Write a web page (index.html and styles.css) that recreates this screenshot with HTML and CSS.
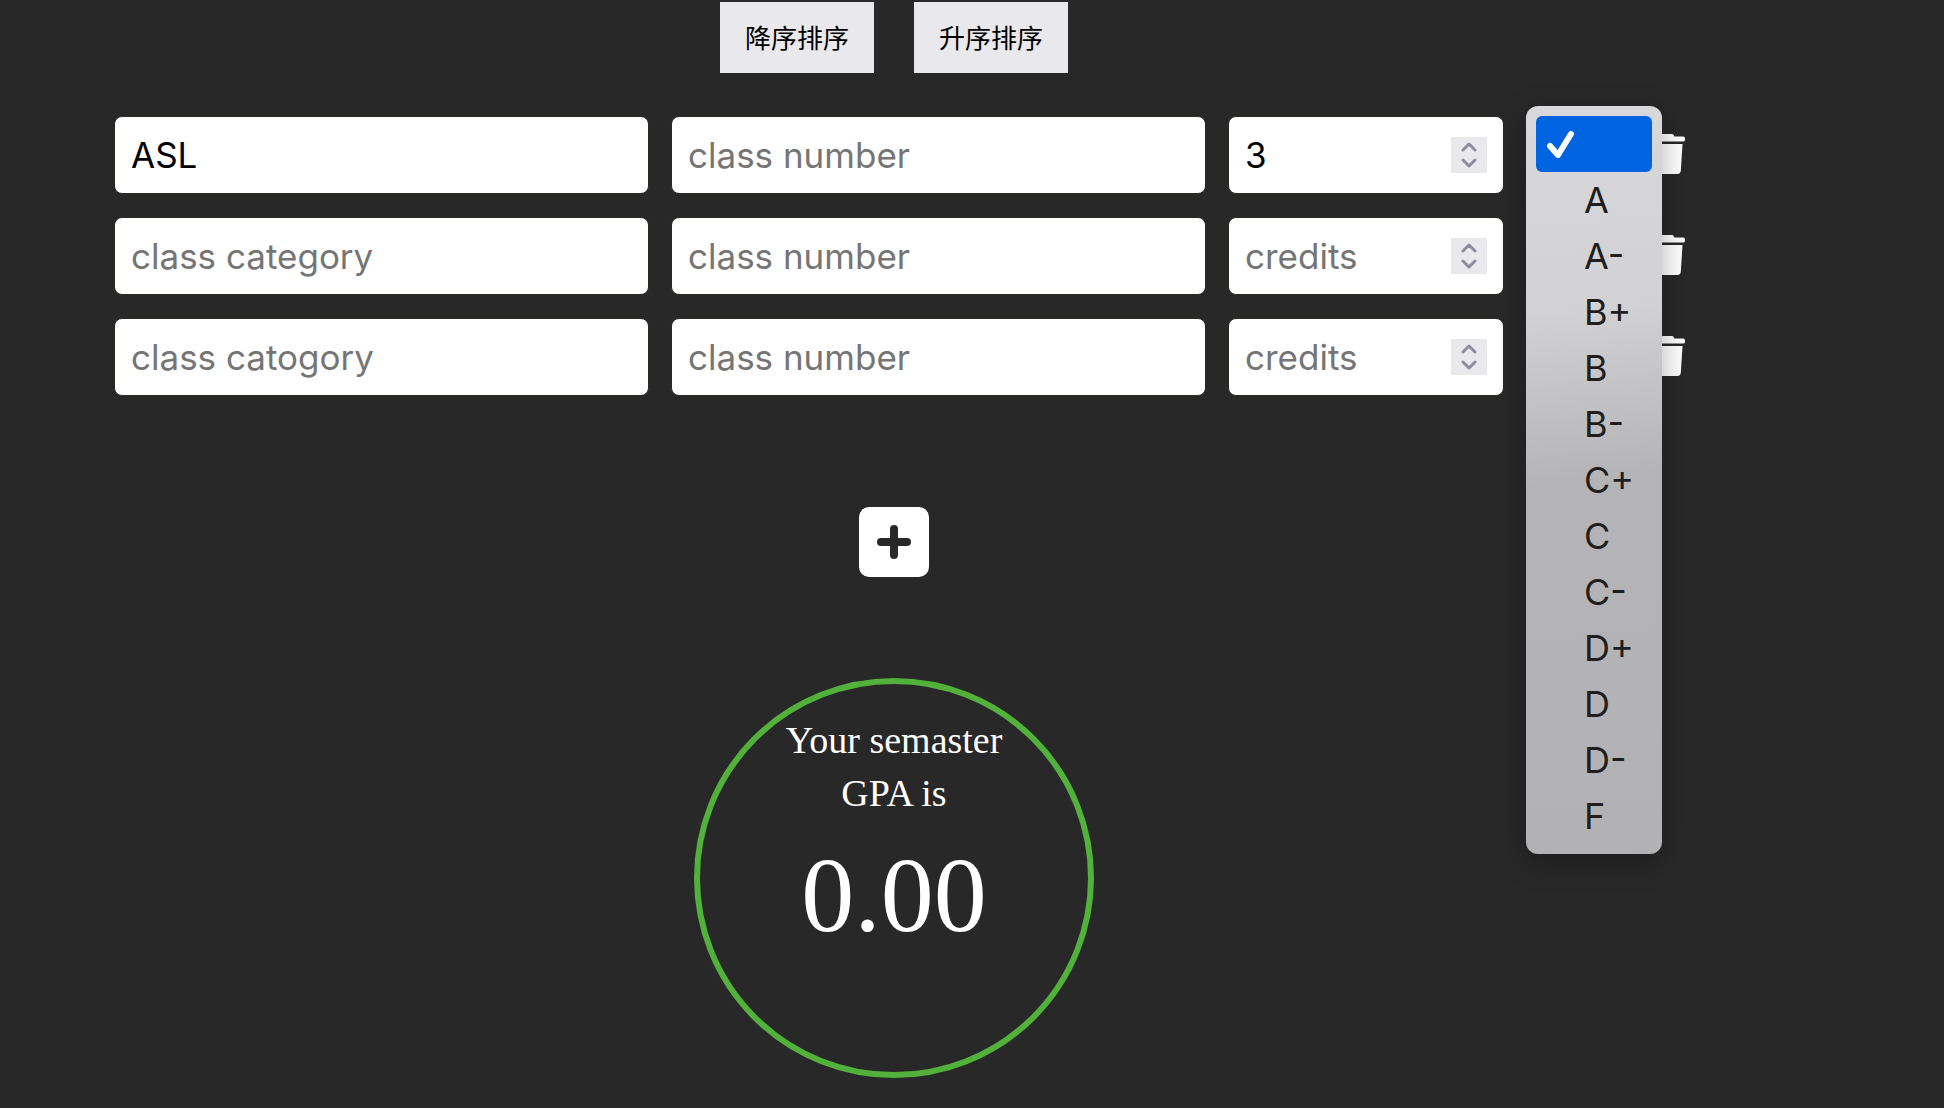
FILE: index.html
```html
<!DOCTYPE html>
<html lang="en">
<head>
<meta charset="utf-8">
<title>GPA Calculator</title>
<link rel="stylesheet" href="styles.css">
</head>
<body>
<svg class="sprite" aria-hidden="true">
  <symbol id="trash" viewBox="0 0 448 512"><path d="M424 32H312l-9.400-18.700A24 24 0 0 0 281.100 0H166.800a23.720 23.720 0 0 0-21.400 13.300L136 32H24A24 24 0 0 0 0 56v16a24 24 0 0 0 24 24h400a24 24 0 0 0 24-24V56a24 24 0 0 0-24-24zM53.200 467a48 48 0 0 0 47.900 45h245.800a48 48 0 0 0 47.900-45L416 128H32z"/></symbol>
  <symbol id="steps" viewBox="0 0 36 36"><path d="M12 13l6-6 6 6M12 23l6 6 6-6" fill="none" stroke="#8e8c9b" stroke-width="3" stroke-linecap="round" stroke-linejoin="round"/></symbol>
</svg>
<main class="page">
  <div class="sorting">
    <button class="sort" type="button">降序排序</button>
    <button class="sort" type="button">升序排序</button>
  </div>
  <form class="classes">
    <div class="row">
      <input class="field" type="text" aria-label="class category" placeholder="class category" value="ASL">
      <input class="field" type="text" aria-label="class number" placeholder="class number">
      <div class="credits">
        <input class="field" type="number" aria-label="credits" placeholder="credits" value="3">
        <svg class="steps" aria-hidden="true"><use href="#steps"/></svg>
      </div>
      <div class="grade">
        <select class="field" aria-label="grade"><option></option><option>A</option><option>B</option><option>C</option><option>D</option><option>F</option></select>
        <ul class="menu" role="listbox" aria-label="grade">
          <li class="option selected" role="option" aria-selected="true"><svg class="check" viewBox="0 0 28 28" aria-hidden="true"><path d="M3 16l8 9L24 4" fill="none" stroke="#fff" stroke-width="6" stroke-linecap="round" stroke-linejoin="round"/></svg></li>
          <li class="option" role="option">A</li>
          <li class="option" role="option">A-</li>
          <li class="option" role="option">B+</li>
          <li class="option" role="option">B</li>
          <li class="option" role="option">B-</li>
          <li class="option" role="option">C+</li>
          <li class="option" role="option">C</li>
          <li class="option" role="option">C-</li>
          <li class="option" role="option">D+</li>
          <li class="option" role="option">D</li>
          <li class="option" role="option">D-</li>
          <li class="option" role="option">F</li>
        </ul>
      </div>
      <button class="delete" type="button" aria-label="delete class"><svg class="trash"><use href="#trash"/></svg></button>
    </div>
    <div class="row">
      <input class="field" type="text" aria-label="class category" placeholder="class category">
      <input class="field" type="text" aria-label="class number" placeholder="class number">
      <div class="credits">
        <input class="field" type="number" aria-label="credits" placeholder="credits">
        <svg class="steps" aria-hidden="true"><use href="#steps"/></svg>
      </div>
      <div class="grade">
        <select class="field" aria-label="grade"><option></option><option>A</option><option>B</option><option>C</option><option>D</option><option>F</option></select>
      </div>
      <button class="delete" type="button" aria-label="delete class"><svg class="trash"><use href="#trash"/></svg></button>
    </div>
    <div class="row">
      <input class="field" type="text" aria-label="class category" placeholder="class catogory">
      <input class="field" type="text" aria-label="class number" placeholder="class number">
      <div class="credits">
        <input class="field" type="number" aria-label="credits" placeholder="credits">
        <svg class="steps" aria-hidden="true"><use href="#steps"/></svg>
      </div>
      <div class="grade">
        <select class="field" aria-label="grade"><option></option><option>A</option><option>B</option><option>C</option><option>D</option><option>F</option></select>
      </div>
      <button class="delete" type="button" aria-label="delete class"><svg class="trash"><use href="#trash"/></svg></button>
    </div>
  </form>
  <button class="add" type="button" aria-label="add class"><svg class="plus" viewBox="0 0 34 34"><path d="M17 4v26M4 17h26" stroke="#282828" stroke-width="8" stroke-linecap="round"/></svg></button>
  <section class="result">
    <h1 class="caption">Your semaster GPA is</h1>
    <output class="gpa">0.00</output>
  </section>
</main>
</body>
</html>
```
FILE: styles.css
```css
* {
  box-sizing: border-box;
}

body {
  margin: 0;
  background: #282828;
  font-family: Inter, "Liberation Sans", sans-serif;
}

.sprite {
  display: none;
}

.page {
  display: flex;
  flex-direction: column;
  align-items: center;
  padding: 2px 156px 30px 0;
}

.sorting {
  display: flex;
  gap: 40px;
}

.sort {
  padding: 15px 25px 17px;
  border: 0;
  background: #e9e8ed;
  color: #000;
  font: 26px/39px "Noto Sans CJK SC", sans-serif;
}

.classes {
  display: flex;
  flex-direction: column;
  gap: 23px;
  align-self: stretch;
  margin: 43px 0 111px;
  padding: 0 103px 0 114px;
}

.row {
  display: grid;
  grid-template-columns: minmax(0, 535fr) minmax(0, 535fr) minmax(0, 276fr) 102px 35px;
  column-gap: 22px;
  align-items: center;
}

.field {
  display: block;
  width: 100%;
  height: 78px;
  padding: 0 16px;
  border: 1px solid #282820;
  border-radius: 8px;
  background: #fff;
  color: #000;
  font: 35px/44px Inter, "Liberation Sans", sans-serif;
  appearance: none;
}

.field::placeholder {
  color: #757575;
  opacity: 1;
}

.field::-webkit-inner-spin-button {
  appearance: none;
  margin: 0;
}

.credits {
  display: grid;
  align-items: center;
}

.credits > * {
  grid-area: 1 / 1;
}

.steps {
  justify-self: end;
  width: 36px;
  height: 36px;
  margin-right: 17px;
  background: #e9e8ed;
}

.grade {
  position: relative;
}

.menu {
  position: absolute;
  z-index: 1;
  top: -10px;
  left: 0;
  width: 136px;
  margin: 0;
  padding: 10px;
  border-radius: 12px;
  background: linear-gradient(174deg, #d8d8db 0, #d2d2d5 27%, #b4b4b7 50%, #b2b2b5 100%);
  box-shadow: 0 8px 30px rgba(0, 0, 0, 0.3);
  color: #1e1e1e;
  font-size: 36px;
  line-height: 56px;
  list-style: none;
}

.option {
  display: flex;
  align-items: center;
  height: 56px;
  padding-left: 48px;
}

.selected {
  padding-left: 11px;
  border-radius: 6px;
  background: #0063e0;
}

.check {
  width: 28px;
  height: 28px;
}

.delete {
  display: flex;
  padding: 0 0 3px;
  border: 0;
  background: none;
}

.trash {
  width: 35px;
  height: 40px;
  fill: #fff;
}

.add {
  display: grid;
  place-items: center;
  width: 70px;
  height: 70px;
  padding: 0;
  border: 0;
  border-radius: 10px;
  background: #fff;
}

.plus {
  width: 34px;
  height: 34px;
}

.result {
  display: flex;
  flex-direction: column;
  align-items: center;
  gap: 16px;
  width: 400px;
  height: 400px;
  margin-top: 101px;
  padding: 30px 70px;
  border: 6px solid #51b13a;
  border-radius: 50%;
  color: #fff;
  font-family: "Liberation Serif", serif;
  text-align: center;
}

.caption {
  margin: 0;
  font-size: 38px;
  font-weight: 400;
  line-height: 53px;
}

.gpa {
  font-size: 106px;
  line-height: 120px;
}
```
